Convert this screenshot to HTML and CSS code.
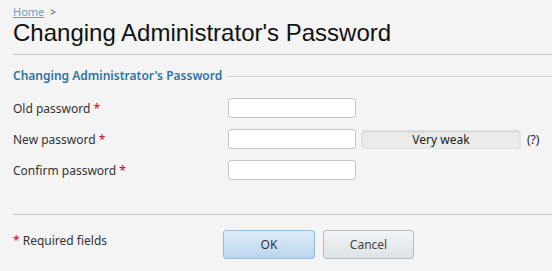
FILE: index.html
```html
<!DOCTYPE html>
<html>
<head>
<meta charset="utf-8">
<link rel="stylesheet" href="styles.css">
</head>
<body>
<div class="page">
  <div class="crumb"><a href="#">Home</a><span class="sep">&gt;</span></div>
  <h1 class="title">Changing Administrator's Password</h1>
  <div class="legend"><span class="legend-text">Changing Administrator's Password</span><span class="legend-line"></span></div>
  <div class="form">
    <div class="row">
      <label class="label">Old password <span class="req">*</span></label>
      <input class="input" type="password">
    </div>
    <div class="row">
      <label class="label">New password <span class="req">*</span></label>
      <input class="input" type="password">
      <div class="meter">Very weak</div>
      <span class="help">(?)</span>
    </div>
    <div class="row">
      <label class="label">Confirm password <span class="req">*</span></label>
      <input class="input" type="password">
    </div>
  </div>
  <div class="divider"></div>
  <div class="footer">
    <div class="required"><span class="req">*</span> Required fields</div>
    <div class="buttons">
      <button class="btn btn-ok">OK</button>
      <button class="btn btn-cancel">Cancel</button>
    </div>
  </div>
</div>
</body>
</html>
```
FILE: styles.css
```css
html, body {
  margin: 0;
  padding: 0;
  background: #f4f4f4;
}
.page {
  padding-left: 13px;
  font-family: "Noto Sans", "DejaVu Sans", sans-serif;
  color: #333;
}
.crumb {
  padding-top: 5px;
  height: 14px;
  font-size: 11px;
  line-height: 14px;
}
.crumb a {
  color: #6b9dc4;
  text-decoration: underline;
}
.crumb .sep {
  color: #555;
  margin-left: 6px;
  font-size: 10px;
}
.title {
  margin: 0;
  font-family: "Liberation Sans", Arial, sans-serif;
  font-weight: normal;
  font-size: 24px;
  line-height: 28px;
  color: #111;
  padding-bottom: 7px;
  border-bottom: 1px solid #c8c8c8;
}
.legend {
  display: flex;
  align-items: center;
  margin-top: 10px;
  height: 20px;
}
.legend-text {
  font-size: 12px;
  font-weight: 600;
  color: #2e72a0;
}
.legend-line {
  flex: 1;
  margin-left: 5px;
  margin-top: 4px;
  border-top: 1px solid #d2d2d2;
  border-bottom: 1px solid #fff;
}
.form {
  margin-top: 13px;
  display: flex;
  flex-direction: column;
  gap: 11px;
}
.row {
  display: flex;
  align-items: center;
  height: 20px;
}
.label {
  width: 215px;
  font-size: 12px;
  color: #333;
}
.req {
  color: #d0021b;
}
.input {
  box-sizing: border-box;
  width: 128px;
  height: 20px;
  margin: 0;
  border: 1px solid #c6c6c6;
  border-radius: 3px;
  background: #fff;
}
.meter {
  box-sizing: border-box;
  width: 160px;
  height: 19px;
  margin-left: 5px;
  border-radius: 3px;
  background: #ebebeb;
  border: 1px solid #e2e2e2;
  box-shadow: inset 0 1px 2px rgba(0,0,0,0.12);
  font-size: 12px;
  line-height: 17px;
  text-align: center;
  color: #222;
}
.help {
  margin-left: 6px;
  font-size: 12px;
  color: #223;
}
.divider {
  margin-top: 34px;
  border-top: 1px solid #c8c8c8;
}
.footer {
  display: flex;
  align-items: flex-start;
  margin-top: 15px;
}
.required {
  width: 210px;
  font-size: 12px;
  line-height: 16px;
  padding-top: 3px;
  color: #333;
}
.buttons {
  display: flex;
  gap: 8px;
}
.btn {
  box-sizing: border-box;
  width: 92px;
  height: 29px;
  border-radius: 3px;
  font-family: "Noto Sans", "DejaVu Sans", sans-serif;
  font-size: 12px;
  color: #444;
  padding: 0;
}
.btn-ok {
  border: 1px solid #93bce3;
  background: linear-gradient(#deebf8, #bcd6ef);
  color: #333;
}
.btn-cancel {
  border: 1px solid #b7bcc1;
  background: linear-gradient(#f2f4f6, #dde2e6);
  width: 91px;
}
```
